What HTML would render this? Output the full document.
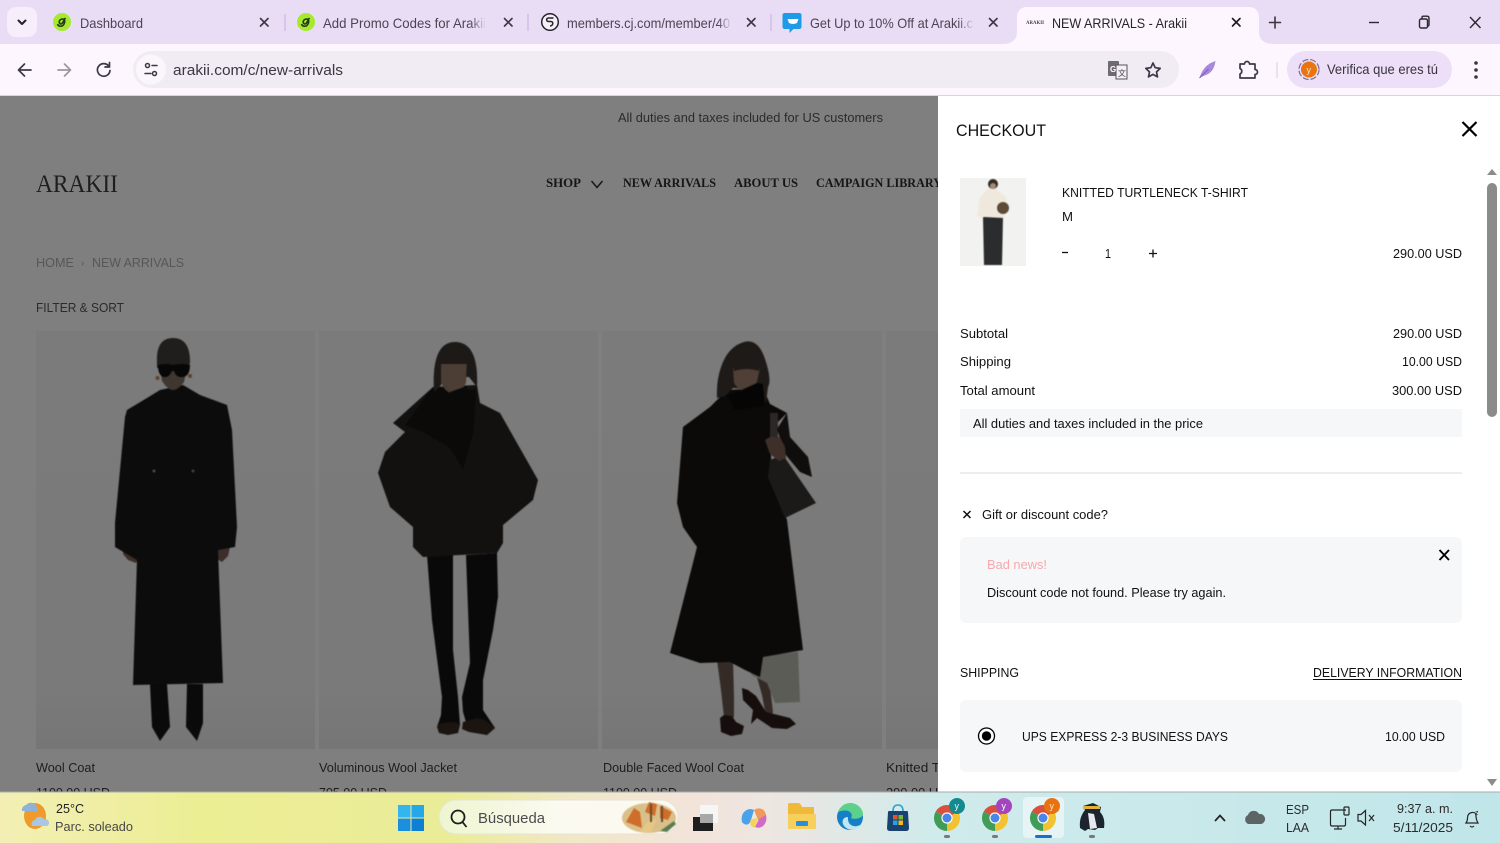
<!DOCTYPE html>
<html lang="es"><head><meta charset="utf-8"><title>NEW ARRIVALS - Arakii</title>
<style>
html,body{margin:0;padding:0;width:1500px;height:843px;overflow:hidden;background:#fff}
svg{display:block}
text{font-family:"Liberation Sans",sans-serif;font-size:13px;fill:#1d1d1d}
.s{font-family:"Liberation Serif",serif}
.tab{font-size:14px;fill:#4a4553}
.p{fill:#111}
.ic{fill:none;stroke:#3c3846;stroke-width:1.7;stroke-linecap:round;stroke-linejoin:round}
</style></head><body>
<svg width="1500" height="843" viewBox="0 0 1500 843" xmlns="http://www.w3.org/2000/svg">
<defs>
<linearGradient id="tb" x1="0" x2="1" y1="0" y2="0">
<stop offset="0" stop-color="#f3efb4"/><stop offset=".13" stop-color="#ecee94"/><stop offset=".3" stop-color="#ebec98"/><stop offset=".38" stop-color="#f0e8c6"/><stop offset=".46" stop-color="#f3e4da"/><stop offset=".52" stop-color="#ece6e2"/><stop offset=".62" stop-color="#d0ebeb"/><stop offset="1" stop-color="#c0e6ea"/>
</linearGradient>
<linearGradient id="ph" x1="0" x2="0" y1="0" y2="1"><stop offset="0" stop-color="#7b7b7b"/><stop offset=".85" stop-color="#7a7a7a"/><stop offset="1" stop-color="#767676"/></linearGradient>
<linearGradient id="fd" x1="0" x2="1" y1="0" y2="0"><stop offset="0" stop-color="#e9ddf5" stop-opacity="0"/><stop offset="1" stop-color="#e9ddf5"/></linearGradient>
<linearGradient id="sb" x1="0" x2="1" y1="0" y2="0"><stop offset="0" stop-color="#eef6d0"/><stop offset=".5" stop-color="#fbfaf0"/><stop offset="1" stop-color="#fdf8f0"/></linearGradient>
<filter id="b" color-interpolation-filters="sRGB" x="-5%" y="-5%" width="110%" height="110%"><feGaussianBlur stdDeviation=".6"/></filter>
<symbol id="chrome" viewBox="-14 -14 28 28" overflow="visible">
<path d="M0 0L-11.26-6.5A13 13 0 0 1 11.26-6.5Z" fill="#d9503f"/>
<path d="M0 0L11.26-6.5A13 13 0 0 1 0 13Z" fill="#f2c230"/>
<path d="M0 0L0 13A13 13 0 0 1-11.26-6.5Z" fill="#3f9d55"/>
<circle r="5.6" fill="#fff"/><circle r="4.5" fill="#4a86e8"/>
</symbol>
</defs>

<!-- browser chrome -->
<rect width="1500" height="44" fill="#e9ddf5"/>
<rect y="44" width="1500" height="52" fill="#fdf6fe"/>
<rect x="7" y="7" width="30" height="30" rx="9" fill="#f6eefb"/>
<path d="M18.500 20.500l3.500 3.500 3.500-3.500" fill="none" stroke="#222" stroke-width="2" stroke-linecap="round" stroke-linejoin="round"/>
<path d="M1003 44c8 0 14-4 14-12V17c0-6 4-10 10-10h222c6 0 10 4 10 10v15c0 8 6 12 14 12z" fill="#fdf6fe"/>
<g stroke="#cfc0e6" stroke-width="1.500"><path d="M285 14v17M528 14v17M771 14v17"/></g>

<circle cx="62" cy="22" r="9" fill="#a6ea2e"/>
<path d="M57.500 24c1 3 5 3 6.500 0s.5-5-1.500-5-4 2-3 4 3 1 4.500-3l1.500-2" fill="none" stroke="#26351a" stroke-width="1.600"/>
<text class="tab" x="80" y="28" textLength="63" lengthAdjust="spacingAndGlyphs">Dashboard</text>
<circle cx="306" cy="22" r="9" fill="#a6ea2e"/>
<path d="M301.500 24c1 3 5 3 6.500 0s.5-5-1.500-5-4 2-3 4 3 1 4.500-3l1.500-2" fill="none" stroke="#26351a" stroke-width="1.600"/>
<text class="tab" x="323" y="28" textLength="163" lengthAdjust="spacingAndGlyphs">Add Promo Codes for Arakii</text>
<rect x="470" y="10" width="16" height="24" fill="url(#fd)"/>
<circle cx="550" cy="22" r="8.300" fill="#f5f0f8" stroke="#26232b" stroke-width="1.500"/>
<path d="M553.500 18h-5c-2.500 0-2.500 3.500 0 3.500h2.500c2.500 0 2.500 4-1 4.500" fill="none" stroke="#26232b" stroke-width="1.500"/>
<text class="tab" x="567" y="28" textLength="163" lengthAdjust="spacingAndGlyphs">members.cj.com/member/40</text>
<rect x="718" y="10" width="14" height="24" fill="url(#fd)"/>
<path d="M785 14h15c1 0 2 1 2 2v12c0 1-1 2-2 2h-6l-4 4v-4h-5c-1 0-2-1-2-2V16c0-1 1-2 2-2z" fill="#1e9be8" transform="translate(-.5 -1)"/>
<path d="M788 20h11l-1.500 4q-4 2-8 0z" fill="#fff" transform="translate(-.5 -1)"/>
<text class="tab" x="810" y="28" textLength="163" lengthAdjust="spacingAndGlyphs">Get Up to 10% Off at Arakii.c</text>
<rect x="958" y="10" width="16" height="24" fill="url(#fd)"/>
<text x="1026" y="24" textLength="18" lengthAdjust="spacingAndGlyphs" style="font-size:5px;font-family:'Liberation Serif',serif;font-weight:bold;fill:#444">ARAKII</text>
<text class="tab" style="fill:#27242c" x="1052" y="28" textLength="135" lengthAdjust="spacingAndGlyphs">NEW ARRIVALS - Arakii</text>
<g stroke="#3b3743" stroke-width="1.600" stroke-linecap="round">
<path d="M260.500 18.500l7.500 7.500M268 18.500l-7.500 7.500M504.500 18.500l7.500 7.500M512 18.500l-7.500 7.500M747.500 18.500l7.500 7.500M755 18.500l-7.500 7.500M989.500 18.500l7.500 7.500M997 18.500l-7.500 7.500"/>
<path d="M1232.500 18.500l7.500 7.500M1240 18.500l-7.500 7.500" stroke="#1d1b21"/>
<path d="M1275 17v11M1269.500 22.500h11"/>
</g>
<g fill="none" stroke="#2b2830" stroke-width="1.400">
<path d="M1369 22.500h10"/>
<rect x="1419.500" y="19" width="8" height="9" rx="1.500"/><path d="M1422 19v-1.500q0-1.300 1.300-1.300h3.700q2 0 2 2v6.500q0 1.300-1.500 1.300"/>
<path d="M1470 17l10.500 11M1480.500 17l-10.500 11"/>
</g>

<path d="M31 70H19M24.500 64l-6 6 6 6" class="ic"/>
<path d="M58 70h12M64.500 64l6 6-6 6" class="ic" style="stroke:#9b97a3"/>
<path d="M109 66.500a6.300 6.300 0 1 0 1 4M109.500 62.500v4.500h-4.500" class="ic"/>
<rect x="133" y="51" width="1046" height="37" rx="18.500" fill="#f1ebf4"/>
<circle cx="151" cy="69.500" r="15" fill="#fbf6fc"/>
<g class="ic" style="stroke-width:1.500"><circle cx="147.500" cy="65.500" r="2"/><path d="M152 65.500h5M145 73.500h6"/><circle cx="154.500" cy="73.500" r="2"/></g>
<text x="173" y="75" textLength="170" lengthAdjust="spacingAndGlyphs" style="font-size:15px;fill:#3a3742">arakii.com/c/new-arrivals</text>
<rect x="1108" y="61" width="11" height="15" rx="1" fill="#6e6c72"/><rect x="1116" y="65" width="11" height="14" fill="#f4f1f5" stroke="#55525a"/>
<text x="1110" y="72" style="font-size:8px;font-weight:bold;fill:#fff">G</text>
<text x="1118" y="76" style="font-size:8px;fill:#44414a">文</text>
<path d="M1153 63l2.200 4.700 5 .7-3.700 3.500 1 5-4.500-2.500-4.500 2.500 1-5-3.700-3.500 5-.7z" class="ic"/>
<path d="M1199.500 78c3-9 7-14 16-17-1 8-5 13-11 14.500z" fill="#a98ad8"/><path d="M1199.500 78l9-9" stroke="#7b5cc4" stroke-width="1"/>
<path d="M1240 64h4.500a2.500 2.500 0 0 1 5 0h5.500v5.500a2.500 2.500 0 0 1 0 5V78h-15v-4a3 3 0 0 0 0-5.500z" class="ic"/>
<path d="M1277 62v16" stroke="#ddd3e6" stroke-width="1.200"/>
<rect x="1287" y="51" width="165" height="37" rx="18.500" fill="#ecdff7"/>
<circle cx="1309" cy="69.500" r="10" fill="none" stroke="#7f6e8c" stroke-width="1.200" stroke-dasharray="6 2"/>
<circle cx="1309" cy="69.500" r="8" fill="#ea7411"/><text x="1306.500" y="73" style="font-size:9px;fill:#fbe5c8">y</text>
<text x="1327" y="74" textLength="111" lengthAdjust="spacingAndGlyphs" style="font-size:14px;fill:#38343f">Verifica que eres tú</text>
<g fill="#38343f"><circle cx="1476" cy="63" r="1.800"/><circle cx="1476" cy="70" r="1.800"/><circle cx="1476" cy="77" r="1.800"/></g>
<path d="M0 95.500H1500" stroke="#d9d4dc"/>

<!-- dimmed page -->
<rect y="96" width="940" height="697" fill="#7f7f7f"/>
<text x="618" y="122" textLength="265" lengthAdjust="spacingAndGlyphs" style="fill:#2b2b2b">All duties and taxes included for US customers</text>
<text class="s" x="36" y="192" textLength="82" lengthAdjust="spacingAndGlyphs" style="font-size:25px;fill:#1e1e1e">ARAKII</text>
<text class="s" x="546" y="187" textLength="35" lengthAdjust="spacingAndGlyphs" style="font-weight:bold;fill:#161616">SHOP</text>
<text class="s" x="623" y="187" textLength="93" lengthAdjust="spacingAndGlyphs" style="font-weight:bold;fill:#161616">NEW ARRIVALS</text>
<text class="s" x="734" y="187" textLength="64" lengthAdjust="spacingAndGlyphs" style="font-weight:bold;fill:#161616">ABOUT US</text>
<text class="s" x="816" y="187" textLength="126" lengthAdjust="spacingAndGlyphs" style="font-weight:bold;fill:#161616">CAMPAIGN LIBRARY</text>
<path d="M591.500 181l5.500 6.500 5.500-6.500" fill="none" stroke="#161616" stroke-width="1.500"/>
<text x="36" y="267" textLength="38" lengthAdjust="spacingAndGlyphs" style="fill:#575757">HOME</text>
<text x="81" y="266" style="fill:#575757;font-size:10px">›</text>
<text x="92" y="267" textLength="92" lengthAdjust="spacingAndGlyphs" style="fill:#575757">NEW ARRIVALS</text>
<text x="36" y="312" textLength="88" lengthAdjust="spacingAndGlyphs" style="fill:#2b2b2b">FILTER &amp; SORT</text>

<rect x="36" y="331" width="279" height="418" fill="url(#ph)"/>
<rect x="319" y="331" width="279" height="418" fill="url(#ph)"/>
<rect x="602" y="331" width="280" height="418" fill="url(#ph)"/>
<rect x="886" y="331" width="54" height="418" fill="url(#ph)"/>

<g filter="url(#b)">
<!-- figure 1 -->
<path d="M150 684L167 684 170 727 160 741 152 727ZM187 684L203 684 203 723 197 741 186 727Z" fill="#0a0a0a"/>
<path d="M123 547h15v13l-2 3-8-3-5-6zM217 547h13l-2 9-6 6-5-3z" fill="#3c2f29"/>
<path d="M160 390L147 398 127 410 125 417 115 523 115 547 137 560 133 685 223 683 218 550 235 547 237 527 232 430 227 405 200 395 183 385Z" fill="#0c0c0c"/>
<path d="M157 362q-1-24 16-24t17 24l-1 6h-32z" fill="#201e1c"/>
<path d="M160 368h27l-3 14q-6 8-11 8t-11-9z" fill="#3f3630"/>
<path d="M158 365q7-2 15 0q8-2 17 0q0 11-7 12-7 1-9-6h-2q-3 7-8 6-6-1-6-12z" fill="#070707"/>
<circle cx="157.500" cy="378" r="2" fill="#5b4528"/><circle cx="190" cy="376" r="2" fill="#5b4528"/>
<circle cx="154" cy="471" r="1.500" fill="#4a4a4a"/><circle cx="193" cy="471" r="1.500" fill="#3f3f3f"/>
<!-- figure 2 -->
<path d="M427 555L432 620 442 697 441 715 437 727 443 733 456 733 460 725 458 697 453 650 453 555ZM466 555L470 663 462 697 463 712 466 722 470 731 487 735 495 728 483 710 483 680 493 630 498 597 497 553Z" fill="#090909"/>
<path d="M437 727l2 6 9 2 10-2 2-8-4-3-15 1zM463 722l-1 7 7 3 18 3 8-7-10-8-8-2z" fill="#1b1411"/>
<path d="M433 387L393 423 405 432 385 452 378 473 390 507 413 527 413 547 423 557 497 553 503 543 503 525 533 500 538 480 500 413 480 403 477 385Z" fill="#131110"/>
<path d="M433 387L405 425 423 432 450 448 463 470 474 430 476 390Z" fill="#0b0a09"/>
<path d="M434 392q-3-50 21-50t22 45l-8-10h-26l-2 8z" fill="#1c1916"/>
<path d="M441 358q13-5 26 0l-1 25q-5 10-13 10t-12-11z" fill="#4c3d35"/>
<path d="M441 356q13-7 26 0v8h-26z" fill="#1c1916"/>
<path d="M450 392l17-6 2 14-10 10-10-6z" fill="#0a0a0a"/>
<!-- figure 3 -->
<path d="M717 660l4 30 3 27 4 2 6-2 0-20-1-38zM755 670l7 25 3 16-4 6 10 0 2-5-3-25-2-20z" fill="#352b26"/>
<path d="M740 658L798 652 800 702 775 703 767 683 752 675Z" fill="#5b5c55"/>
<path d="M720 718l1 14 10 4 11-2 2-8-8-4-4-6-8-1zM742 688l1 12 10 10-2 14 6-6 15 10 15 1 9-5-6-6-24-6-10-16-8-6z" fill="#160e0c"/>
<path d="M727 390L710 407 683 427 677 503 683 527 697 547 670 653 700 663 730 662 745 670 760 677 763 657 803 650 787 520 772 480 770 430 787 413 770 404 763 388Z" fill="#0b0a09"/>
<path d="M770 413h8v30h-8z" fill="#2b2826"/>
<path d="M787 413l3 24 18 20 4 20-12-5-15-18-8-25z" fill="#100e0d"/>
<path d="M770 460L783 455 816 503 785 518 768 477Z" fill="#1c1a19"/>
<path d="M765 440l5-3h10l5 10 1 11-7 3-9-7z" fill="#3f2f29"/>
<path d="M717 398q-1-20 6-36t21-20 21 17 3 28l-2 16-9-13-24-2-8 8z" fill="#1e1a17"/>
<path d="M733 368q14-8 27 0l-3 14q-5 10-11 10t-12-9z" fill="#4f3f36"/>
<path d="M733 366q13-8 27 0l-1 5q-12-4-25 0z" fill="#1e1a17"/>
<path d="M727 396q15-6 30-13l6 1 2 22-30 4z" fill="#060505"/>
</g>

<text x="36" y="772" textLength="59" lengthAdjust="spacingAndGlyphs">Wool Coat</text>
<text x="319" y="772" textLength="138" lengthAdjust="spacingAndGlyphs">Voluminous Wool Jacket</text>
<text x="603" y="772" textLength="141" lengthAdjust="spacingAndGlyphs">Double Faced Wool Coat</text>
<text x="886" y="772" textLength="80" lengthAdjust="spacingAndGlyphs">Knitted Turtle</text>
<text x="36" y="797" textLength="74" lengthAdjust="spacingAndGlyphs">1100.00 USD</text>
<text x="319" y="797" textLength="68" lengthAdjust="spacingAndGlyphs">705.00 USD</text>
<text x="603" y="797" textLength="74" lengthAdjust="spacingAndGlyphs">1100.00 USD</text>
<text x="886" y="797" textLength="70" lengthAdjust="spacingAndGlyphs">290.00 USD</text>

<!-- panel -->
<rect x="938" y="96" width="562" height="697" fill="#fff"/>
<text class="p" x="956" y="136" textLength="90" lengthAdjust="spacingAndGlyphs" style="font-size:17px">CHECKOUT</text>
<path d="M1462.500 122l14 14M1476.500 122l-14 14" stroke="#000" stroke-width="2.200"/>

<rect x="960" y="178" width="66" height="88" fill="#f2f2f0"/>
<g filter="url(#b)">
<path d="M983 217l1 48h18l1-48z" fill="#2b2c2e"/>
<path d="M988 189l-8 8-3 19 5 2 2-1 20 1 0-7 4-2-2-12-10-8z" fill="#efe9dd"/>
<circle cx="1003" cy="208" r="6" fill="#5d4a37"/>
<circle cx="993" cy="184" r="5" fill="#342a24"/><circle cx="993" cy="186" r="3" fill="#a58a76"/>
</g>
<text class="p" x="1062" y="197" textLength="186" lengthAdjust="spacingAndGlyphs">KNITTED TURTLENECK T-SHIRT</text>
<text class="p" x="1062" y="221" textLength="11" lengthAdjust="spacingAndGlyphs">M</text>
<path d="M1062 252.500h6" stroke="#111" stroke-width="1.300"/>
<text class="p" x="1105" y="258" textLength="6" lengthAdjust="spacingAndGlyphs">1</text>
<path d="M1149 253.500h8M1153 249.500v8" stroke="#111" stroke-width="1.300"/>
<text class="p" x="1393" y="258" textLength="69" lengthAdjust="spacingAndGlyphs">290.00 USD</text>

<text class="p" x="960" y="338" textLength="48" lengthAdjust="spacingAndGlyphs">Subtotal</text>
<text class="p" x="1393" y="338" textLength="69" lengthAdjust="spacingAndGlyphs">290.00 USD</text>
<text class="p" x="960" y="366" textLength="51" lengthAdjust="spacingAndGlyphs">Shipping</text>
<text class="p" x="1402" y="366" textLength="60" lengthAdjust="spacingAndGlyphs">10.00 USD</text>
<text class="p" x="960" y="395" textLength="75" lengthAdjust="spacingAndGlyphs">Total amount</text>
<text class="p" x="1392" y="395" textLength="70" lengthAdjust="spacingAndGlyphs">300.00 USD</text>
<rect x="960" y="409" width="502" height="28" fill="#f6f7f8"/>
<text class="p" x="973" y="428" textLength="230" lengthAdjust="spacingAndGlyphs">All duties and taxes included in the price</text>
<path d="M960 473h502" stroke="#e2e2e2" stroke-width="1.300"/>
<path d="M963.500 511l7 7M970.500 511l-7 7" stroke="#111" stroke-width="1.500"/>
<text class="p" x="982" y="519" textLength="126" lengthAdjust="spacingAndGlyphs">Gift or discount code?</text>
<rect x="960" y="537" width="502" height="86" rx="6" fill="#f6f7f8"/>
<path d="M1439.500 550l9.500 10M1449 550l-9.500 10" stroke="#000" stroke-width="1.900"/>
<text x="987" y="569" textLength="60" lengthAdjust="spacingAndGlyphs" style="fill:#f6a9ad">Bad news!</text>
<text class="p" x="987" y="597" textLength="239" lengthAdjust="spacingAndGlyphs">Discount code not found. Please try again.</text>
<text class="p" x="960" y="677" textLength="59" lengthAdjust="spacingAndGlyphs">SHIPPING</text>
<text class="p" x="1313" y="677" textLength="149" lengthAdjust="spacingAndGlyphs">DELIVERY INFORMATION</text>
<path d="M1313 679.500h149" stroke="#111"/>
<rect x="960" y="700" width="502" height="72" rx="6" fill="#f6f7f8"/>
<circle cx="986.500" cy="736" r="8" fill="#fff" stroke="#000" stroke-width="1.300"/><circle cx="986.500" cy="736" r="4.700" fill="#000"/>
<text class="p" x="1022" y="741" textLength="206" lengthAdjust="spacingAndGlyphs">UPS EXPRESS 2-3 BUSINESS DAYS</text>
<text class="p" x="1385" y="741" textLength="60" lengthAdjust="spacingAndGlyphs">10.00 USD</text>
<rect x="1487" y="183" width="10" height="234" rx="5" fill="#8b8b8b"/>
<path d="M1487 175l5-6 5 6z" fill="#8b8b8b"/><path d="M1487 779l5 7 5-7z" fill="#8b8b8b"/>

<!-- taskbar -->
<rect y="792" width="1500" height="51" fill="url(#tb)"/>
<path d="M0 792h1500" stroke="#a8acaa" stroke-width="1"/>
<ellipse cx="35" cy="816" rx="11" ry="13" fill="#ee9b2b"/>
<path d="M22 811a5 5 0 0 1 4-6 6 6 0 0 1 10 1 3 3 0 0 1 1 5z" fill="#8fb2d8"/>
<path d="M32 826a4 4 0 0 1 3-6 5 5 0 0 1 9-.5 3 3 0 0 1 3 6.500z" fill="#a9c6e6"/>
<text x="56" y="813" textLength="28" lengthAdjust="spacingAndGlyphs" style="fill:#222">25°C</text>
<text x="55" y="831" textLength="78" lengthAdjust="spacingAndGlyphs" style="fill:#474747">Parc. soleado</text>
<rect x="398" y="805" width="12.500" height="12.500" fill="#33b5ef"/><rect x="411.500" y="805" width="12.500" height="12.500" fill="#25a7ea"/><rect x="398" y="818.500" width="12.500" height="12.500" fill="#1a8fdd"/><rect x="411.500" y="818.500" width="12.500" height="12.500" fill="#0f7fd4"/>
<rect x="439" y="800" width="239" height="34" rx="17" fill="url(#sb)" stroke="#e5e4d5"/>
<circle cx="458" cy="817" r="6.500" fill="none" stroke="#1c1c1c" stroke-width="1.800"/><path d="M462.500 822l4 5" stroke="#1c1c1c" stroke-width="1.800"/>
<text x="478" y="823" textLength="67" lengthAdjust="spacingAndGlyphs" style="font-size:15px;fill:#4c4c4c">Búsqueda</text>
<g filter="url(#b)"><ellipse cx="649" cy="818" rx="27" ry="15" fill="#d9c08a"/><path d="M626 822l8-14 6 4 2 16zM645 812l4-10 8 2-2 12zM660 806l12 6-4 8-8-2z" fill="#cf6d2a"/><path d="M640 832l9-12 7 0-5 12z" fill="#e7c785"/><path d="M660 831l14-10 2 3-9 8z" fill="#5c7b4f"/><path d="M650 804h2v18h-2zM661 806h2v16h-2z" fill="#6d4a2a"/></g>
<rect x="693" y="817" width="20" height="14" fill="#1e1e1e"/><rect x="700" y="805" width="18" height="18" fill="#f6f6f4"/><rect x="700" y="814" width="13" height="9" fill="#a8a8a8"/>
<path d="M742 822c-2-10 6-15 12-12l-3 10c-1 4-5 7-9 2z" fill="#4aa3ea"/><path d="M754 810c6-4 13 0 12 8l-8 2z" fill="#f09a5a"/><path d="M766 815c2 8-4 15-11 12l4-8z" fill="#d36bc6"/><path d="M751 819l7-1-3 9c-4 1-6-3-4-8z" fill="#f4d35e"/>
<path d="M788 805q0-2 2-2h8q2 0 3 2l1 2h12v20q0 2-2 2h-22q-2 0-2-2z" fill="#f1b93a"/><rect x="788" y="814" width="28" height="15" rx="1" fill="#f7cf5b"/><rect x="796" y="821" width="12" height="5" rx="1" fill="#2b8ed8"/>
<circle cx="850" cy="817" r="13" fill="#1580c6"/><path d="M838 812a13 13 0 0 1 25 1c1 5-8 7-12 5 3-5-3-10-13-6z" fill="#5cd18c"/><path d="M848 817c-1 8 6 12 14 7-3 6-12 8-17 3-4-4-3-10 3-10z" fill="#bfe6f2"/>
<path d="M889 811h18q1 0 1 1l1 16q0 3-3 3h-16q-3 0-3-3l1-16q0-1 1-1z" fill="#1a4270"/><path d="M893 811q0-6 5-6t5 6" fill="none" stroke="#2aa4d6" stroke-width="1.600"/>
<rect x="893" y="815" width="4.500" height="4.500" fill="#e8512b"/><rect x="898.500" y="815" width="4.500" height="4.500" fill="#7ab833"/><rect x="893" y="820.500" width="4.500" height="4.500" fill="#22a2e8"/><rect x="898.500" y="820.500" width="4.500" height="4.500" fill="#f5bb1a"/>
<rect x="1023" y="797" width="41" height="41" rx="4" fill="#e6f4f6"/>
<use href="#chrome" x="933" y="804" width="28" height="28"/><circle cx="957" cy="806" r="8" fill="#138a8e"/><text x="954.500" y="809" style="font-size:9px;fill:#e9fbfb">y</text>
<use href="#chrome" x="981" y="804" width="28" height="28"/><circle cx="1004" cy="806" r="8" fill="#a445bd"/><text x="1001.500" y="809" style="font-size:9px;fill:#fff">y</text>
<use href="#chrome" x="1029" y="804" width="28" height="28"/><circle cx="1052" cy="806" r="8" fill="#e8720f"/><text x="1049.500" y="809" style="font-size:9px;fill:#fde4c6">y</text>
<path d="M1080 828c-1-9 2-14 5-18l-2-4 10-3 8 4-1 5c4 4 5 10 4 16h-6l-3 2-7-1-3 2z" fill="#1c2430"/><path d="M1088 813l6 1 3 14-7 1z" fill="#e5e8ec"/><rect x="1083" y="806" width="17" height="3" fill="#e2b33a"/>
<g fill="#77797c"><rect x="944" y="835" width="6" height="3" rx="1.500"/><rect x="992" y="835" width="6" height="3" rx="1.500"/><rect x="1089" y="835" width="6" height="3" rx="1.500"/></g>
<rect x="1035" y="835" width="17" height="3" rx="1.500" fill="#1672c9"/>
<path d="M1215 821l5-5.500 5 5.500" fill="none" stroke="#222" stroke-width="1.700"/>
<path d="M1248 824a5 5 0 0 1 0-9 6 6 0 0 1 11-1 5 5 0 0 1 2 10z" fill="#5d6466"/>
<text x="1286" y="814" textLength="23" lengthAdjust="spacingAndGlyphs" style="fill:#2b2b2b">ESP</text>
<text x="1286" y="832" textLength="23" lengthAdjust="spacingAndGlyphs" style="fill:#2b2b2b">LAA</text>
<g fill="none" stroke="#262626" stroke-width="1.200">
<path d="M1346 810h-14q-1.500 0-1.500 1.500v13q0 1.500 1.500 1.500h12q1.500 0 1.500-1.500V818M1338 826v3h-4M1338 829h4"/>
<rect x="1344" y="807" width="5" height="8" rx="1"/>
<path d="M1358 814.500h3l4.500-4v14.500l-4.500-4h-3zM1369 815l5 6M1374 815l-5 6"/>
<path d="M1466 823q1.500-2 1.500-5 0-5 4.500-5.500t4 4l.5 3q.5 2 1.500 3.500zM1470 826q2 2 4 0"/>
</g>
<text x="1475" y="815" style="font-size:7px;fill:#222">z</text>
<text x="1397" y="813" textLength="56" lengthAdjust="spacingAndGlyphs" style="fill:#2b2b2b">9:37 a. m.</text>
<text x="1393" y="832" textLength="60" lengthAdjust="spacingAndGlyphs" style="fill:#2b2b2b">5/11/2025</text>
</svg>
</body></html>
